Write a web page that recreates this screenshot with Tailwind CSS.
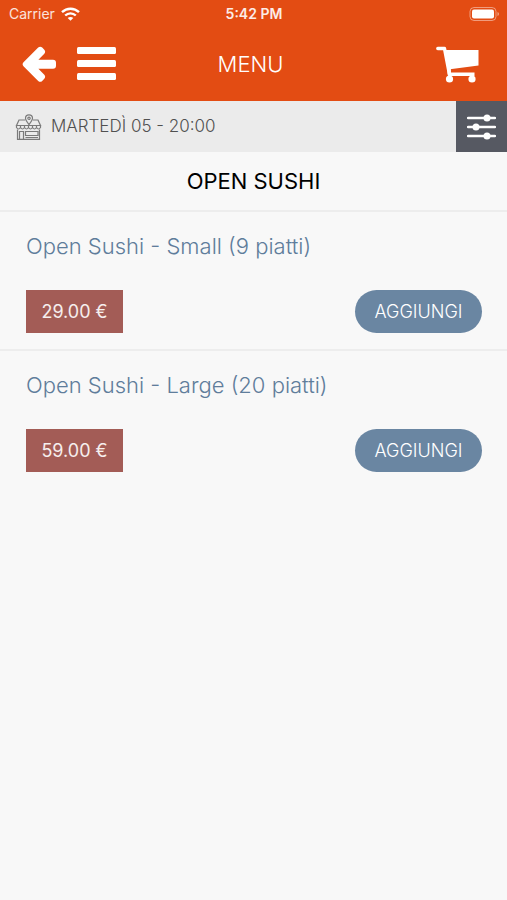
<!DOCTYPE html>
<html lang="it">
<head>
    <meta charset="UTF-8">
    <meta name="viewport" content="width=device-width, initial-scale=1.0">
    <title>Menu</title>
    <script src="https://cdn.jsdelivr.net/npm/@tailwindcss/browser@4"></script>
</head>
<body class="min-h-screen bg-[#f8f8f8] font-['Inter','Liberation_Sans',sans-serif]">
    <!-- Header -->
    <header class="bg-[#e34c13] text-white">
        <div class="grid grid-cols-3 items-center h-7 pl-[9px] pr-2">
            <div class="flex items-center gap-[6px] text-sm text-white/85">
                <span>Carrier</span>
                <svg class="w-[19px] h-[14px]" viewBox="0 0 19 14" fill="none" stroke="#fff" stroke-width="2.4">
                    <path d="M1 5.2C5.800.6 13.200.6 18 5.200"/>
                    <path d="M4.200 8.500C7.200 5.600 11.800 5.600 14.800 8.500"/>
                    <path d="M9.500 13.800L6.700 11C8.200 9.500 10.800 9.500 12.300 11Z" fill="#fff" stroke="none"/>
                </svg>
            </div>
            <div class="text-center text-sm font-semibold text-white/90">5:42 PM</div>
            <svg class="justify-self-end w-[30px] h-[14px]" viewBox="0 0 30 14">
                <rect x="1" y="0.500" width="26" height="13" rx="4" fill="none" stroke="#fff" stroke-opacity=".45"/>
                <rect x="3" y="2.500" width="22" height="9" rx="2" fill="#fff"/>
                <path d="M28.500 5v4q1.500-.7 1.500-2t-1.500-2z" fill="#fff" fill-opacity=".5"/>
            </svg>
        </div>
        <div class="grid grid-cols-3 items-center h-[73px] pb-px pl-[22px] pr-7">
            <div class="flex items-center gap-5">
                <button type="button" aria-label="Indietro">
                    <svg class="block w-[35px] h-[38px]" viewBox="0 0 35 38">
                        <path d="M1.500 17.200L16.200 2.600Q18.200 .8 20.200 2.600L22.300 4.700Q24 6.700 22.300 8.700L16.400 14.700H31Q34 14.700 34 17.700V20.800Q34 23.800 31 23.800H16.400L22.300 29.800Q24 31.800 22.300 33.800L20.200 35.900Q18.200 37.600 16.200 35.900L1.500 21.200Q-.3 19.200 1.500 17.200Z" fill="#fff"/>
                    </svg>
                </button>
                <button type="button" aria-label="Apri menu">
                    <svg class="block w-[39px] h-[34px]" viewBox="0 0 39 34" fill="#fff">
                        <rect y="0" width="39" height="7" rx="1.500"/>
                        <rect y="13" width="39" height="7" rx="1.500"/>
                        <rect y="26" width="39" height="7" rx="1.500"/>
                    </svg>
                </button>
            </div>
            <h1 class="text-center text-[22px] font-light">MENU</h1>
            <button type="button" class="justify-self-end" aria-label="Carrello">
                <svg class="block w-[43px] h-[37px]" viewBox="0 0 43 37">
                    <path d="M1.800 2.500H8.500L13.200 27" fill="none" stroke="#fff" stroke-width="3.400" stroke-linecap="round" stroke-linejoin="round"/>
                    <path d="M9 4H42.500V19.500L14 23.300L12.500 23Z" fill="#fff"/>
                    <path d="M13.200 22V28.300H38.500" fill="none" stroke="#fff" stroke-width="3.400" stroke-linejoin="round"/>
                    <path d="M13.500 28V32M36 28V32" stroke="#fff" stroke-width="2.500"/>
                    <circle cx="13.500" cy="33" r="3.600" fill="#fff"/>
                    <circle cx="36" cy="33" r="3.600" fill="#fff"/>
                </svg>
            </button>
        </div>
    </header>

    <!-- Pickup slot -->
    <div class="flex h-[51px] bg-[#ebebeb]">
        <div class="flex flex-1 items-center gap-[9px] pl-[15px] text-[17px] text-[#6b6b6b]">
            <svg class="w-[27px] h-[26px]" viewBox="0 0 27 26" fill="none" stroke="#7a7a7a" stroke-width="1.2">
                <path d="M10 6H4L1.500 11.500H25.500L23 6H18"/>
                <path d="M14 10.500C11.500 7.500 10.500 6 10.500 4.300A3.500 3.500 0 0 1 17.500 4.300C17.500 6 16.500 7.500 14 10.500Z"/>
                <circle cx="14" cy="4.300" r="1.200"/>
                <path d="M1.500 11.500V13.500Q3.500 16.500 5.500 13.500Q7.500 16.500 9.500 13.500Q11.500 16.500 13.500 13.500Q15.500 16.500 17.500 13.500Q19.500 16.500 21.500 13.500Q23.500 16.500 25.500 13.500V11.500"/>
                <path d="M5.500 11.500V13.500M9.500 11.500V13.500M13.500 11.500V13.500M17.500 11.500V13.500M21.500 11.500V13.500"/>
                <path d="M2.500 15.500V25.300H24.500V15.500M4.500 25V17.500H8.500V25M10.500 17.500H23V21.500H10.500ZM10.500 23.500H23"/>
            </svg>
            <span class="font-light text-[#505050]">MARTEDÌ 05 - 20:00</span>
        </div>
        <button type="button" class="flex w-[51px] items-center justify-center bg-[#565962]" aria-label="Filtri">
            <svg class="w-[29px] h-[26px]" viewBox="0 0 29 26" fill="#fff">
                <path d="M1 4H28M1 13H28M1 22H28" stroke="#fff" stroke-width="2.300" stroke-linecap="round"/>
                <circle cx="20" cy="4" r="3.500"/>
                <circle cx="9" cy="13" r="3.500"/>
                <circle cx="20" cy="22" r="3.500"/>
            </svg>
        </button>
    </div>

    <!-- Products -->
    <main>
        <h2 class="flex h-[60px] items-center justify-center border-b-2 border-[#ededed] text-[22px] text-black">OPEN SUSHI</h2>
        <article class="border-b-2 border-[#ededed] pl-[26px] pr-[25px] pt-[18px] pb-4">
            <h3 class="text-[22px] leading-8 font-light text-[#5f7d9b]">Open Sushi - Small (9 piatti)</h3>
            <div class="mt-7 flex items-center justify-between">
                <span class="flex h-[43px] w-[97px] items-center justify-center bg-[#a35c56] text-lg text-white/90">29.00 €</span>
                <button type="button" class="h-[43px] w-[127px] rounded-full bg-[#6a86a2] text-lg font-light text-white">AGGIUNGI</button>
            </div>
        </article>
        <article class="pl-[26px] pr-[25px] pt-[18px] pb-4">
            <h3 class="text-[22px] leading-8 font-light text-[#5f7d9b]">Open Sushi - Large (20 piatti)</h3>
            <div class="mt-7 flex items-center justify-between">
                <span class="flex h-[43px] w-[97px] items-center justify-center bg-[#a35c56] text-lg text-white/90">59.00 €</span>
                <button type="button" class="h-[43px] w-[127px] rounded-full bg-[#6a86a2] text-lg font-light text-white">AGGIUNGI</button>
            </div>
        </article>
    </main>
</body>
</html>
